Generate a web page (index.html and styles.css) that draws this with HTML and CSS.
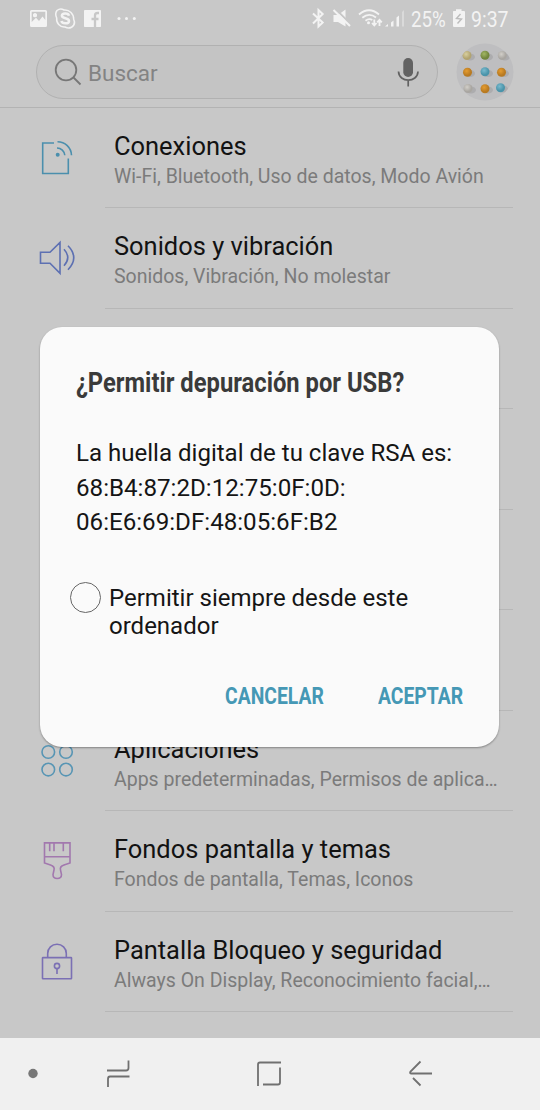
FILE: index.html
```html
<!DOCTYPE html>
<html lang="es">
<head>
<meta charset="utf-8">
<title>Ajustes</title>
<link rel="stylesheet" href="styles.css">
</head>
<body>
<div class="phone">
  <header class="status">
    <svg class="status-left" width="120" height="38" viewBox="0 0 120 38">
      <path fill="#f3f3f3" fill-rule="evenodd" d="M1.500 10H15.500Q17 10 17 11.500V25.500Q17 27 15.500 27H1.500Q0 27 0 25.500V11.500Q0 10 1.500 10ZM1.700 11.700V22L6 17.800L9 21L12.500 16.500L15.300 20V11.700ZM5 13.300a2 2 0 1 1 -.01 0Z"/>
      <circle cx="5" cy="15.300" r="2" fill="#f3f3f3"/>
      <path fill="none" stroke="#f3f3f3" stroke-width="1.500" d="M27 10.500C29.500 8.500 32 8.800 34 10C39.500 9.500 44 14 43.700 19.500C46 23.500 43 28 38.500 28C37 28 36 27.500 35 27C30 27.500 26 23 26.700 18C25.500 15.500 25.500 12.500 27 10.500Z"/>
      <path fill="none" stroke="#f3f3f3" stroke-width="2.500" d="M39 15.700C38.300 12.900 31.900 12.900 31.900 15.800C31.900 18.900 39 17.700 39 20.900C39 24.100 32.200 24.200 31.400 21"/>
      <rect x="54" y="10" width="17" height="17" rx=".8" fill="#f3f3f3"/>
      <path fill="none" stroke="#c8c8c8" stroke-width="2.300" d="M65 27V15.500Q65 13 67.500 13H69M61.500 19H68.500"/>
      <g fill="#f3f3f3"><circle cx="89" cy="18.500" r="1.500"/><circle cx="96.500" cy="18.500" r="1.500"/><circle cx="104.300" cy="18.500" r="1.500"/></g>
    </svg>
    <div class="status-right">
      <svg width="96" height="38" viewBox="0 0 96 38">
        <path fill="none" stroke="#f3f3f3" stroke-width="2" d="M2 13.500L11.700 22.500L7.500 26.500V10L11.700 14L2 23.500"/>
        <path fill="#f3f3f3" d="M22.500 15H27L34.500 9.500V26.500L27 22H22.500Z"/>
        <path stroke="#c8c8c8" stroke-width="2" d="M24 8.500L40.500 25"/><path stroke="#f3f3f3" stroke-width="2" d="M22.500 10L39 26"/>
        <g fill="none" stroke="#f3f3f3" stroke-width="1.800"><path d="M48 14.500Q58 6 68 14.500M51.300 17.800Q58 12 65 17.500M54.500 20.700Q58 18 61.300 20"/><path d="M63.300 19.500V25.500M61 23L63.300 25.500L65.600 23M68.500 26V20M66.200 22.300L68.500 19.800L70.800 22.300"/></g>
        <circle cx="57.500" cy="22.700" r="1.500" fill="#f3f3f3"/>
        <path fill="#f3f3f3" d="M74 26.500L77 24V26.500ZM80 26.500V22.500L82.500 20.500V26.500ZM85.500 26.500V17.500L88 15.500V26.500Z"/><path fill="#dadada" d="M91 26.500V12L93 10V26.500Z"/>
      </svg>
      <span class="battery"><span class="narrow">25%</span></span>
      <svg width="14" height="38" viewBox="0 0 14 38"><path fill="#f3f3f3" d="M1.500 11H4V9.300H9.500V11H12Q13 11 13 12V26Q13 27 12 27H2Q1 27 1 26V12Q1 11 1.500 11Z"/><path fill="none" stroke="#bcbcbc" stroke-width="1.400" d="M8.500 14L4.500 18.500L9.500 19L5.500 23.500"/></svg>
      <span class="clock"><span class="narrow">9:37</span></span>
    </div>
  </header>

  <div class="searchbar">
    <div class="search">
      <svg width="28" height="28" viewBox="0 0 28 28"><g fill="none" stroke="#777" stroke-width="1.800"><circle cx="12" cy="12" r="10.300"/><path d="M19.500 19.500L26.500 26.500"/></g></svg>
      <span class="hint">Buscar</span>
      <svg width="22" height="30" viewBox="0 0 22 30"><rect x="6.300" y="1" width="9.700" height="19" rx="4.850" fill="#626262"/><path fill="none" stroke="#626262" stroke-width="1.700" d="M1.500 14.500C2 26 20.500 26 21 14.500M11.200 23V29.500"/></svg>
    </div>
    <svg class="avatar" width="58" height="58" viewBox="0 0 58 58">
      <defs>
        <clipPath id="disc"><circle cx="29" cy="29" r="28.500"/></clipPath>
        <radialGradient id="orange" cx=".4" cy=".35"><stop offset="0" stop-color="#e59c30"/><stop offset="1" stop-color="#b87a22"/></radialGradient>
        <radialGradient id="blue" cx=".4" cy=".35"><stop offset="0" stop-color="#79bace"/><stop offset="1" stop-color="#4a94aa"/></radialGradient>
        <radialGradient id="green" cx=".4" cy=".35"><stop offset="0" stop-color="#a3b765"/><stop offset="1" stop-color="#72863d"/></radialGradient>
        <radialGradient id="cream" cx=".4" cy=".35"><stop offset="0" stop-color="#d8cf9f"/><stop offset="1" stop-color="#b2a470"/></radialGradient>
        <radialGradient id="white" cx=".4" cy=".35"><stop offset="0" stop-color="#d2cfc9"/><stop offset="1" stop-color="#a9a6a1"/></radialGradient>
      </defs>
      <g clip-path="url(#disc)">
        <rect width="58" height="58" fill="#bebec0"/>
        <g fill="#98979a" opacity=".45"><ellipse cx="14" cy="14" rx="5" ry="3.500"/><ellipse cx="32" cy="14" rx="5" ry="3.500"/><ellipse cx="49" cy="14" rx="5" ry="3.500"/><ellipse cx="14" cy="30.500" rx="5" ry="3.500"/><ellipse cx="32" cy="30.500" rx="5" ry="3.500"/><ellipse cx="48" cy="30.500" rx="5" ry="3.500"/><ellipse cx="15" cy="47" rx="5" ry="3.500"/><ellipse cx="32" cy="47" rx="5" ry="3.500"/><ellipse cx="47" cy="46" rx="5" ry="3.500"/></g>
        <circle cx="11" cy="12.500" r="4.500" fill="url(#cream)"/><circle cx="29" cy="12.200" r="4.500" fill="url(#green)"/><circle cx="46.300" cy="12.500" r="4.500" fill="url(#white)"/>
        <circle cx="11.500" cy="29.300" r="4.500" fill="url(#orange)"/><circle cx="29" cy="28.700" r="4.500" fill="url(#blue)"/><circle cx="45.500" cy="29.300" r="4.500" fill="url(#orange)"/>
        <circle cx="12" cy="45.500" r="4.500" fill="url(#white)"/><circle cx="29" cy="45.700" r="4.500" fill="url(#orange)"/><circle cx="44.500" cy="44.700" r="4.500" fill="url(#blue)"/>
      </g>
    </svg>
  </div>

  <ul class="settings">
    <li class="row">
      <svg class="icon" viewBox="0 0 40 40" stroke="#4b8fad"><path d="M17 5H5.700V35.500H31.300V20.500M20.500 3.700A14 14 0 0 1 34.500 17.300M20 10A7.800 7.800 0 0 1 27.800 17.300"/><circle cx="20.700" cy="16.700" r="1" stroke-width="2"/></svg>
      <div class="text"><div class="title">Conexiones</div><div class="sub">Wi-Fi, Bluetooth, Uso de datos, Modo Avión</div></div>
    </li>
    <li class="row">
      <svg class="icon" viewBox="0 0 40 40" stroke="#5d70b2"><path d="M3.500 14.200H13L23 4.500V35.300L13 25.200H3.500ZM27 11.200Q34.500 19.500 27 27.800M31 7.800Q42.500 19.700 31 31.700"/></svg>
      <div class="text"><div class="title">Sonidos y vibración</div><div class="sub">Sonidos, Vibración, No molestar</div></div>
    </li>
    <li class="row"><div class="text"></div></li>
    <li class="row"><div class="text"></div></li>
    <li class="row"><div class="text"></div></li>
    <li class="row"><div class="text"></div></li>
    <li class="row">
      <svg class="icon" viewBox="0 0 40 40" stroke="#5795b4"><circle cx="11.300" cy="11" r="6.300"/><circle cx="29" cy="11" r="6.300"/><circle cx="11.300" cy="28.600" r="6.300"/><circle cx="29" cy="28.600" r="6.300"/></svg>
      <div class="text"><div class="title">Aplicaciones</div><div class="sub">Apps predeterminadas, Permisos de aplica…</div></div>
    </li>
    <li class="row">
      <svg class="icon" viewBox="0 0 40 40" stroke="#a278ae"><path d="M7.500 1.900H33V22L27 24Q22.500 25.500 23.500 29L24.500 33.500Q24.500 37.500 20.200 37.500Q16 37.500 16 33.500L17 29Q18 25.500 13.500 24L7.500 22ZM7.500 15.800H33M12.700 2V10.300M17 2V10.300M26.300 2V10.300"/></svg>
      <div class="text"><div class="title">Fondos pantalla y temas</div><div class="sub">Fondos de pantalla, Temas, Iconos</div></div>
    </li>
    <li class="row">
      <svg class="icon" viewBox="0 0 40 40" stroke="#7b70b4"><rect x="5.500" y="15.600" width="29" height="21.200" rx=".5"/><path d="M10.700 15.500V11.500A9.300 9.300 0 0 1 29.300 11.500V15.500M20 26.700V32"/><circle cx="20" cy="24" r="2.600"/></svg>
      <div class="text"><div class="title">Pantalla Bloqueo y seguridad</div><div class="sub">Always On Display, Reconocimiento facial,…</div></div>
    </li>
  </ul>

  <nav class="navbar">
    <svg width="540" height="72" viewBox="0 0 540 72">
      <circle cx="33" cy="35.500" r="4.700" fill="#777"/>
      <g fill="none" stroke="#707070" stroke-width="1.800"><path d="M107 32.500H126Q128.500 32.500 128.500 30V22.500M129.500 38.500H110Q108 38.500 108 41V49"/><path d="M281 24.500H260Q258 24.500 258 26.500V48M263 46.500H278Q280 46.500 280 44.500V29.500"/><path d="M420.500 23.500L410.500 33.500Q409.300 35.500 411.500 35.500H432M413 40L420.500 47.500"/></g>
    </svg>
  </nav>

  <section class="dialog">
    <h1 class="heading"><span class="narrow">¿Permitir depuración por USB?</span></h1>
    <p class="message">La huella digital de tu clave RSA es:<br><span class="key">68:B4:87:2D:12:75:0F:0D:<br>06:E6:69:DF:48:05:6F:B2</span></p>
    <div class="always"><span class="radio"></span><span class="label">Permitir siempre desde este<br>ordenador</span></div>
    <div class="actions"><span class="cancel"><span class="narrow">CANCELAR</span></span><span class="accept"><span class="narrow">ACEPTAR</span></span></div>
  </section>
</div>
</body>
</html>
```
FILE: styles.css
```css
* { box-sizing: border-box; }
body { margin: 0; font-family: Roboto, "Liberation Sans", sans-serif; }
.phone { position: relative; width: 540px; height: 1110px; overflow: hidden; background: #c8c8c8; display: flex; flex-direction: column; }
.narrow { display: inline-block; transform-origin: 0 50%; white-space: nowrap; }

.status { height: 38px; padding: 0 30px; display: flex; color: #f3f3f3; font-size: 22px; line-height: 39px; }
.status-right { display: flex; margin-left: 161px; }
.status-right svg, .status-left { flex: none; }
.battery { width: 41px; margin-left: 4px; }
.battery .narrow { transform: scaleX(.85); }
.clock { margin-left: 5px; width: 38px; }
.clock .narrow { transform: scaleX(.885); }

.searchbar { height: 69.5px; border-bottom: 1px solid #b3b3b3; padding: 7px 26px 0 36px; display: flex; justify-content: space-between; }
.search { width: 402px; height: 54px; border: 1px solid #b1b1b1; border-radius: 27px; background: #c4c4c4; display: flex; align-items: center; padding: 0 18px 0 17px; }
.hint { flex: 1; margin-left: 6px; padding-top: 1px; font-size: 22.5px; color: #838383; }
.avatar { margin-top: -2px; }

.settings { list-style: none; margin: 0; padding: 0.2px 0 0; height: 930.5px; }
.row { height: 100.5px; display: flex; justify-content: flex-end; align-items: center; padding-right: 27px; }
.icon { width: 40px; height: 40px; margin-right: 28px; flex: none; fill: none; stroke-width: 1.6; }
.text { width: 408px; height: 100.5px; border-bottom: 1px solid #b7b7b7; padding: 21.9px 0 0 9px; white-space: nowrap; flex: none; }
.title { font-size: 25.45px; line-height: 32px; color: #121212; }
.sub { font-size: 19.5px; line-height: 24px; margin-top: 3.3px; color: #7b7b7b; }

.navbar { height: 72px; background: #f0f0f0; flex: none; }
.navbar svg { display: block; }

.dialog { position: absolute; left: 40px; top: 327px; width: 459px; height: 420px; border-radius: 22px; background: #fafafa; box-shadow: 0 1px 2px rgba(0,0,0,.35); padding: 39px 36px 0; color: #151515; display: flex; flex-direction: column; }
.heading { margin: 0; height: 34px; font-size: 27.2px; line-height: 34px; font-weight: 700; color: #3a3a3a; }
.heading .narrow { transform: scaleX(.874); }
.message { margin: 36px 0 0; font-size: 24.05px; line-height: 34.5px; white-space: nowrap; }
.key { font-size: 24.15px; }
.always { display: flex; margin: 39px 0 0 -7px; height: 60px; }
.radio { width: 31px; height: 31px; border: 1.5px solid #666; border-radius: 50%; margin-top: 3px; margin-left: 0.5px; flex: none; }
.label { margin-left: 8.5px; margin-top: 5px; font-size: 24px; line-height: 28.7px; white-space: nowrap; }
.actions { display: flex; margin-top: 41px; font-size: 23.2px; line-height: 33px; font-weight: 700; color: #4598b5; }
.cancel { width: 99px; margin-left: 149px; }
.accept { width: 86px; margin-left: 54px; }
.actions .narrow { transform: scaleX(.834); }
```
